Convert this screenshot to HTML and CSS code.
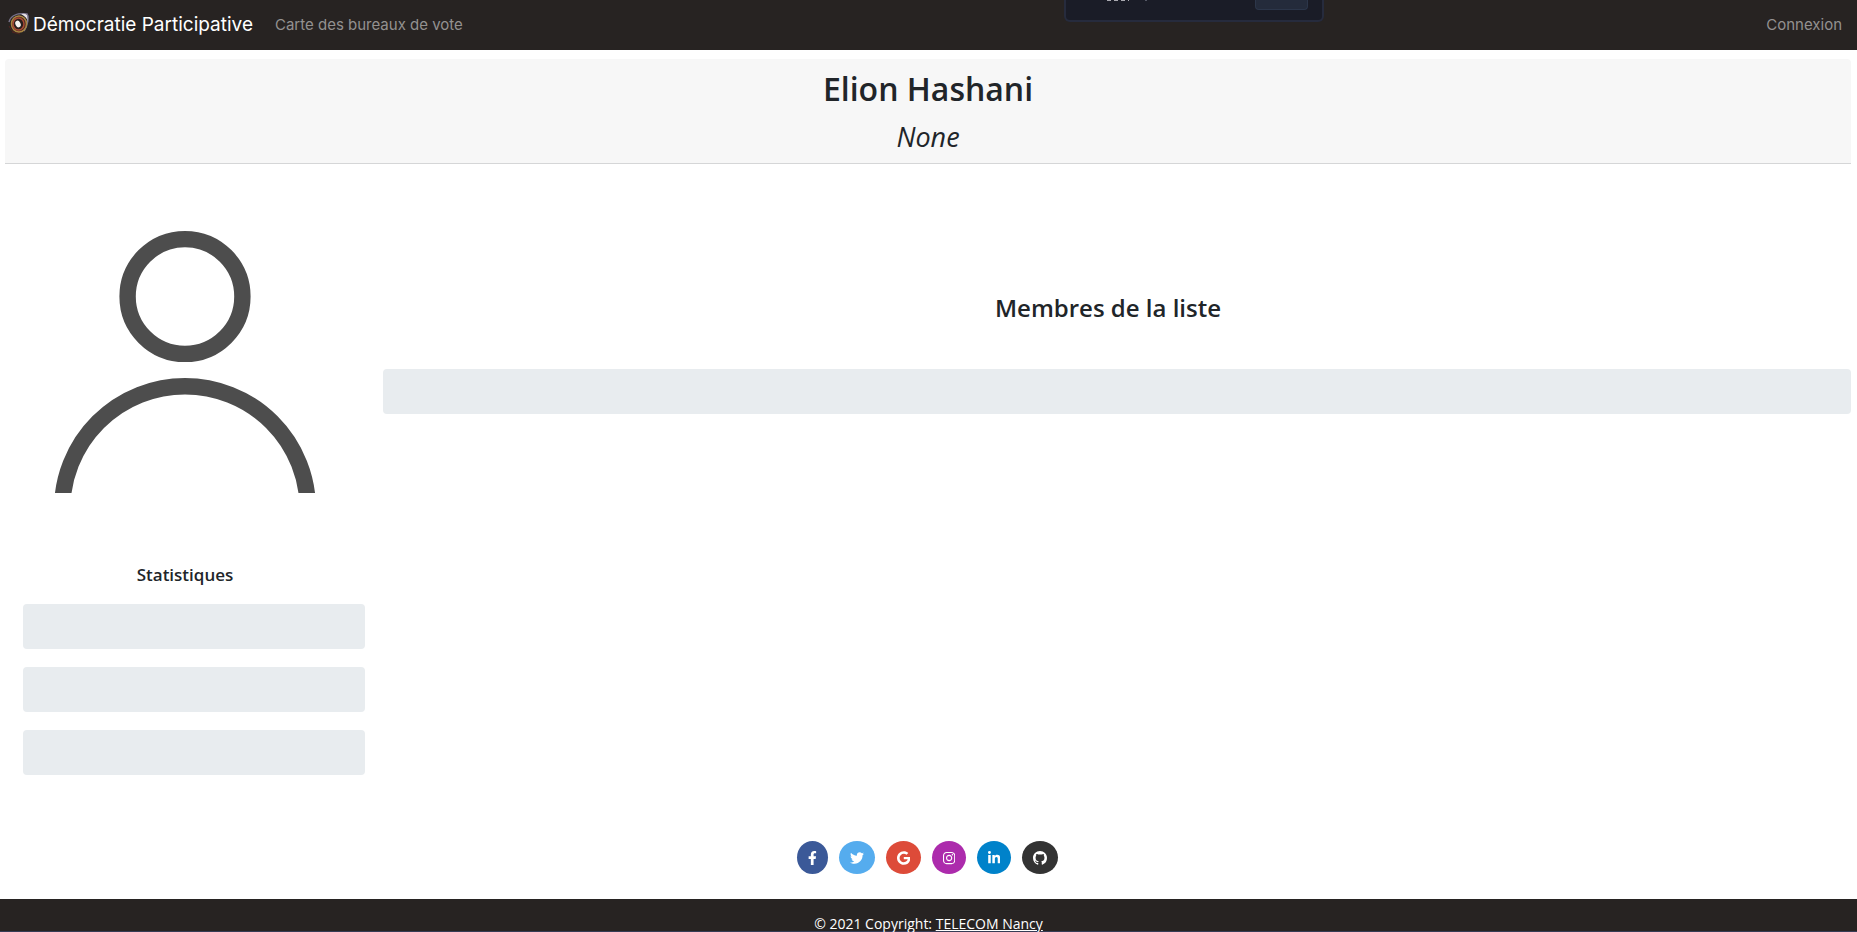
FILE: index.html
```
<!DOCTYPE html>
<html lang="fr">
<head>
<meta charset="utf-8">
<title>Démocratie Participative</title>
<link rel="stylesheet" href="styles.css">
</head>
<body>
<nav class="navbar">
  <a class="brand" href="#">
    <svg class="brand-logo" viewBox="0 0 22 22" aria-hidden="true">
      <path d="M2 9C4 1 13 0 20 1c2 3 1 11-3 17" fill="none" stroke="#77728a" stroke-width="1.5"/>
      <path d="M14 1q4-1 6 1l1 7q-1-5-7-8z" fill="#e4e0e6"/>
      <ellipse cx="12" cy="11" rx="7.500" ry="8" fill="#4c2b22" stroke="#a98542" stroke-width="1.500"/>
      <ellipse cx="11.500" cy="11" rx="5.500" ry="6" fill="#2a1e1d" stroke="#a84a35" stroke-width="1.500"/>
      <ellipse cx="11" cy="11" rx="2.500" ry="3.500" fill="#f4f1ee" transform="rotate(-28 11 11)"/>
      <path d="M2 13q2 5 6 7M5 19l8 2" fill="none" stroke="#51231f"/>
    </svg>
    <span>Démocratie Participative</span>
  </a>
  <a class="nav-link" href="#">Carte des bureaux de vote</a>
  <a class="nav-link nav-login" href="#">Connexion</a>
</nav>
<div class="widget" aria-hidden="true"><i class="widget-text"></i><i class="widget-dot"></i><i class="widget-button"></i></div>

<div class="page">
  <header class="title-card">
    <h1>Elion Hashani</h1>
    <p>None</p>
  </header>
  <main class="columns">
    <aside class="profile">
      <svg class="avatar" viewBox="0 0 328 328" role="img" aria-label="Portrait">
        <clipPath id="bust"><path d="M0 0H328V311H0z"/></clipPath>
        <g fill="none" stroke="#4d4d4d" stroke-width="16.400" clip-path="url(#bust)">
          <circle cx="164" cy="114.500" r="57.400"/>
          <circle cx="164" cy="327" r="122.800"/>
        </g>
      </svg>
      <h2>Statistiques</h2>
      <div class="stats">
        <div class="bar"></div>
        <div class="bar"></div>
        <div class="bar"></div>
      </div>
    </aside>
    <section class="members">
      <h2>Membres de la liste</h2>
      <div class="bar"></div>
    </section>
  </main>
</div>

<footer class="footer">
  <div class="social">
    <a class="facebook" href="#" aria-label="Facebook"><svg viewBox="0 0 320 512"><path d="M279.140 288l14.220-92.660h-88.910v-60.130c0-25.350 12.420-50.060 52.240-50.060h40.420V6.260S260.430 0 225.360 0c-73.220 0-121.080 44.380-121.080 124.720v70.620H22.890V288h81.390v224h100.170V288z"/></svg></a>
    <a class="twitter" href="#" aria-label="Twitter"><svg viewBox="0 0 512 512"><path d="M459.370 151.716c.325 4.548.325 9.097.325 13.645 0 138.720-105.583 298.558-298.558 298.558-59.452 0-114.680-17.219-161.137-47.106 8.447.974 16.568 1.299 25.340 1.299 49.055 0 94.213-16.568 130.274-44.832-46.132-.975-84.792-31.188-98.112-72.772 6.498.974 12.995 1.624 19.818 1.624 9.421 0 18.843-1.300 27.614-3.573-48.081-9.747-84.143-51.980-84.143-102.985v-1.299c13.969 7.797 30.214 12.670 47.431 13.319-28.264-18.843-46.781-51.005-46.781-87.391 0-19.492 5.197-37.360 14.294-52.954 51.655 63.675 129.300 105.258 216.365 109.807-1.624-7.797-2.599-15.918-2.599-24.040 0-57.828 46.782-104.934 104.934-104.934 30.213 0 57.502 12.670 76.670 33.137 23.715-4.548 46.456-13.320 66.599-25.340-7.798 24.366-24.366 44.833-46.132 57.827 21.117-2.273 41.584-8.122 60.426-16.243-14.292 20.791-32.161 39.308-52.628 54.253z"/></svg></a>
    <a class="google" href="#" aria-label="Google"><svg viewBox="0 0 488 512"><path d="M488 261.800C488 403.300 391.100 504 248 504 110.800 504 0 393.200 0 256S110.800 8 248 8c66.800 0 123 24.500 166.300 64.900l-67.500 64.900C258.500 52.600 94.300 116.600 94.300 256c0 86.500 69.100 156.600 153.700 156.600 98.200 0 135-70.400 140.800-106.900H248v-85.300h236.100c2.300 12.700 3.900 24.900 3.900 41.400z"/></svg></a>
    <a class="instagram" href="#" aria-label="Instagram"><svg viewBox="0 0 448 512"><path d="M224 141c-64 0-115 51-115 115s51 115 115 115 115-51 115-115-51-115-115-115zm0 190a75 75 0 1 1 0-150 75 75 0 0 1 0 150zM370 136a27 27 0 1 1-54 0 27 27 0 0 1 54 0zM132 32C59 32 0 91 0 164v184c0 73 59 132 132 132h184c73 0 132-59 132-132V164c0-73-59-132-132-132zm4 40h176c58 0 96 38 96 96v176c0 58-38 96-96 96H136c-58 0-96-38-96-96V168c0-58 38-96 96-96z" fill-rule="evenodd"/></svg></a>
    <a class="linkedin" href="#" aria-label="LinkedIn"><svg viewBox="0 0 448 512"><path d="M100.280 448H7.400V148.900h92.880zM53.790 108.100C24.090 108.100 0 83.500 0 53.800a53.790 53.790 0 0 1 107.580 0c0 29.700-24.100 54.300-53.790 54.300zM447.900 448h-92.680V302.400c0-34.700-.7-79.200-48.290-79.200-48.290 0-55.690 37.700-55.690 76.700V448h-92.780V148.900h89.080v40.800h1.300c12.400-23.500 42.690-48.300 87.880-48.300 94 0 111.280 61.900 111.280 142.300V448z"/></svg></a>
    <a class="github" href="#" aria-label="GitHub"><svg viewBox="0 0 16 16"><path d="M8 0C3.580 0 0 3.580 0 8c0 3.540 2.290 6.530 5.470 7.590.4.070.55-.17.55-.38 0-.19-.01-.82-.01-1.490-2.010.37-2.530-.49-2.690-.94-.09-.23-.48-.94-.82-1.130-.28-.15-.68-.52-.01-.53.63-.01 1.080.58 1.230.82.72 1.210 1.870.87 2.330.66.07-.52.28-.87.51-1.070-1.780-.2-3.640-.89-3.640-3.950 0-.87.31-1.590.82-2.150-.08-.2-.36-1.020.08-2.120 0 0 .67-.21 2.200.82a7.600 7.600 0 0 1 4 0c1.530-1.040 2.200-.82 2.200-.82.44 1.100.16 1.920.08 2.120.51.56.82 1.270.82 2.150 0 3.070-1.870 3.750-3.650 3.950.29.25.54.73.54 1.480 0 1.070-.01 1.930-.01 2.200 0 .21.15.46.55.38A8.010 8.010 0 0 0 16 8c0-4.420-3.580-8-8-8z"/></svg></a>
  </div>
  <div class="copyright">© 2021 Copyright: <a href="#">TELECOM Nancy</a></div>
</footer>
</body>
</html>
```
FILE: styles.css
```
* { box-sizing: border-box; }
body {
  margin: 0;
  height: 100vh;
  overflow: hidden;
  display: flex;
  flex-direction: column;
  background: #fff;
  color: #212529;
  font-family: "Open Sans", "Noto Sans", sans-serif;
}
h1, h2, p { margin: 0; }

.navbar {
  display: flex;
  align-items: center;
  height: 50px;
  padding: 0 15px 2px 7px;
  background: #272322;
  font-family: Inter, sans-serif;
}
.brand {
  display: flex;
  align-items: center;
  gap: 4px;
  color: #fff;
  font-size: 19px;
  text-decoration: none;
}
.brand-logo { width: 22px; height: 22px; }
.nav-link {
  margin-left: 22px;
  color: #939190;
  font-size: 15px;
  text-decoration: none;
}
.nav-login { margin-left: auto; }

.widget {
  position: absolute;
  top: 0;
  left: 57.300%;
  width: 260px;
  height: 22px;
  border: 2px solid #262b3d;
  border-top: 0;
  border-radius: 0 0 6px 6px;
  background: #1a1c27;
}
.widget-button {
  position: absolute;
  top: 0;
  right: 14px;
  width: 53px;
  height: 10px;
  border: 1px solid #2c364a;
  border-top: 0;
  border-radius: 0 0 4px 4px;
  background: #242b3b;
}
.widget-text, .widget-dot {
  position: absolute;
  top: 0;
  left: 41px;
  width: 22px;
  height: 1px;
  background: repeating-linear-gradient(90deg, #a9a9b0 0 4px, transparent 4px 7px);
}
.widget-dot { left: 79px; width: 2px; background: #555866; }

.page { flex: 1; padding: 9px 6px 0 5px; }
.title-card {
  height: 105px;
  padding-top: 8px;
  border-bottom: 1px solid #d5d6d7;
  border-radius: 4px 4px 0 0;
  background: #f7f7f7;
  text-align: center;
}
.title-card h1 { font-size: 32px; line-height: 44px; font-weight: 600; }
.title-card p { font-size: 27px; line-height: 52px; font-style: italic; }

.columns { display: flex; gap: 18px; }
.profile { width: 360px; }
.avatar { display: block; width: 328px; height: 328px; margin: 18px auto 0 16px; }
.profile h2 {
  margin: 53px 0 18px;
  font-size: 17px;
  line-height: 23px;
  font-weight: 600;
  text-align: center;
}
.stats { display: grid; gap: 18px; padding-left: 18px; }
.bar { height: 45px; border-radius: 4px; background: #e8ecef; }
.members { flex: 1; padding-top: 126px; }
.members h2 {
  margin-bottom: 43px;
  padding-right: 18px;
  font-size: 24px;
  line-height: 36px;
  font-weight: 600;
  text-align: center;
}

.social { display: flex; justify-content: center; gap: 11px; padding: 0 2px 25px 0; }
.social a {
  display: flex;
  align-items: center;
  justify-content: center;
  width: 34px;
  height: 33px;
  border-radius: 50%;
}
.social svg { height: 14px; fill: #fff; }
.social .facebook { width: 31px; background: #3b5998; }
.social .twitter { width: 36px; background: #55acee; }
.social .google { width: 35px; background: #dd4b39; }
.social .instagram { background: #ac2bac; }
.social .linkedin { background: #0082ca; }
.social .github { width: 36px; background: #333; }
.copyright {
  height: 33px;
  padding-top: 16px;
  border-bottom: 1px solid #363c55;
  background: #272322;
  color: #fff;
  font-size: 14px;
  line-height: 18px;
  text-align: center;
}
.copyright a { color: #fff; }
```
